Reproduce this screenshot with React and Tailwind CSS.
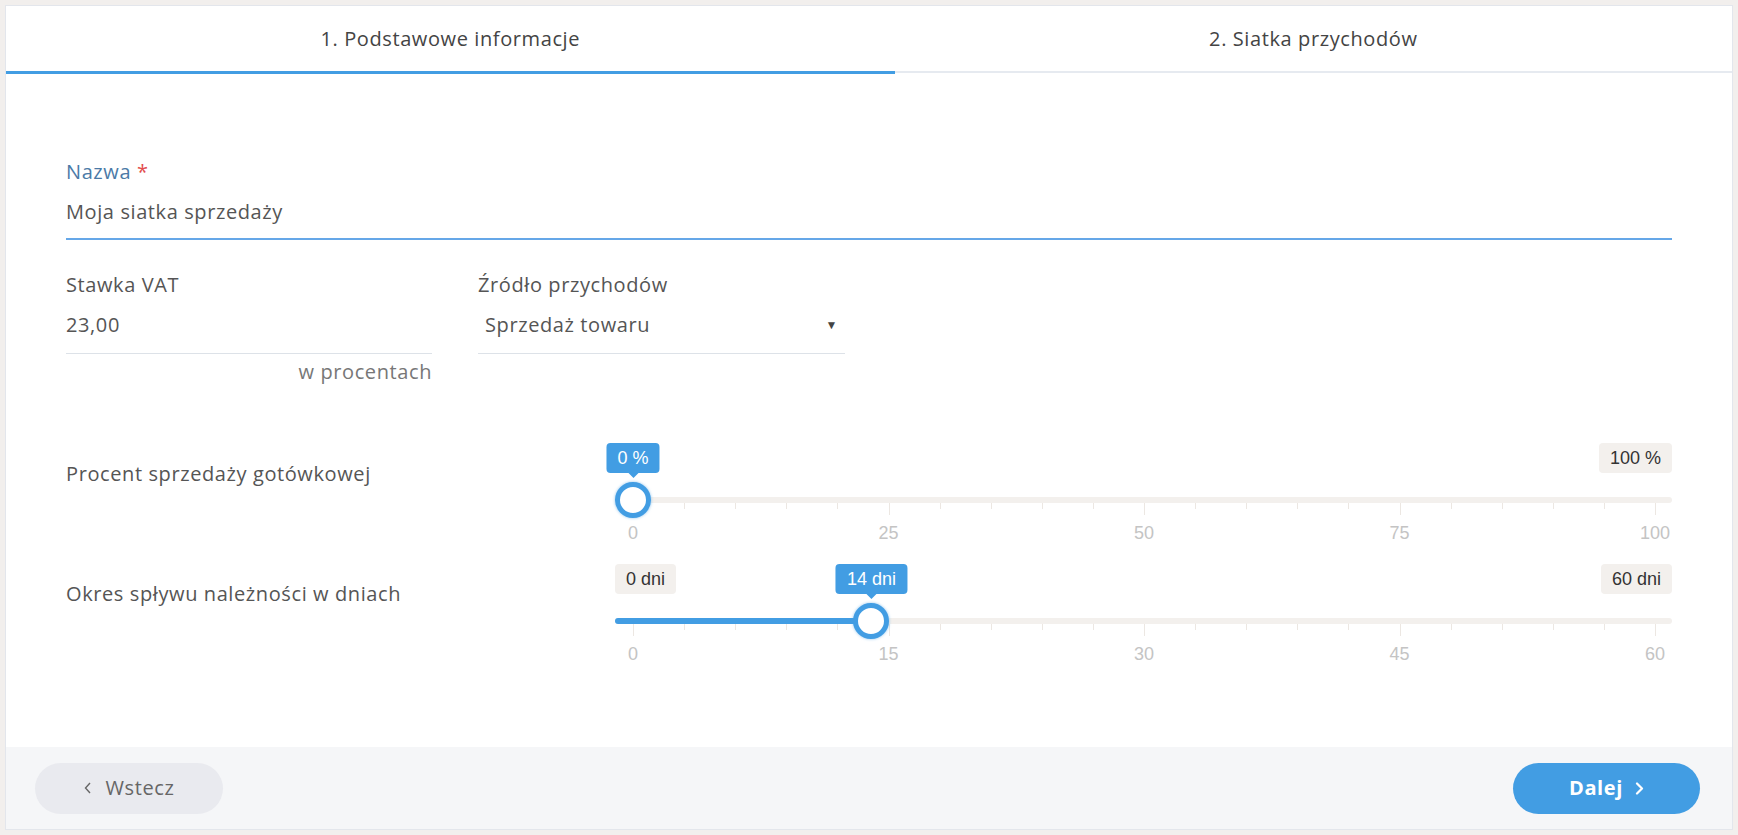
import React from "react";

function Slider({ value, max, unit, showMin }) {
  const ticks = Array.from({ length: 21 }, (_, i) => i);
  // thumb centre travels from 18px to (width - 17px)
  const pos = (f) => `calc(18px + (100% - 35px) * ${f})`;
  const f = value / max;

  return (
    <div className="relative h-[121px] flex-1 font-['Liberation_Sans',Arial,sans-serif] tracking-normal">
      {showMin && (
        <div className="absolute left-0 top-0 h-[30px] px-[11px] rounded-[4px] bg-[#f3f0ed] text-[18px] leading-[30px] text-[#333]">
          0 {unit}
        </div>
      )}
      <div className="absolute right-0 top-0 h-[30px] px-[11px] rounded-[4px] bg-[#f3f0ed] text-[18px] leading-[30px] text-[#333]">
        {max} {unit}
      </div>

      {/* track */}
      <div className="absolute left-0 right-0 top-[54px] h-[6px] rounded-full bg-[#f3f0ed]" />
      {f > 0 && (
        <div
          className="absolute left-0 top-[54px] h-[6px] rounded-full bg-[#429de3]"
          style={{ width: pos(f) }}
        />
      )}

      {/* ticks */}
      {ticks.map((i) => (
        <div
          key={i}
          className={`absolute top-[60px] w-px bg-[#ece7e2] ${i % 5 === 0 ? "h-[12px]" : "h-[6px]"}`}
          style={{ left: pos(i / 20) }}
        />
      ))}

      {/* scale numbers */}
      {[0, 1, 2, 3, 4].map((i) => (
        <div
          key={i}
          className="absolute top-[80px] -translate-x-1/2 text-[18px] leading-[20px] text-[#c4c4c4]"
          style={{ left: pos(i / 4) }}
        >
          {(max / 4) * i}
        </div>
      ))}

      {/* value bubble */}
      <div className="absolute top-0 -translate-x-1/2 flex flex-col items-center" style={{ left: pos(f) }}>
        <div className="h-[30px] px-[11px] rounded-[4px] bg-[#429de3] text-[18px] leading-[30px] text-white whitespace-nowrap">
          {value} {unit}
        </div>
        <div className="w-0 h-0 border-x-[5px] border-x-transparent border-t-[5px] border-t-[#429de3]" />
      </div>

      {/* thumb */}
      <div
        className="absolute top-[39px] -translate-x-1/2 w-[36px] h-[36px] rounded-full border-[5px] border-[#429de3] bg-white shadow-[0_0_3px_rgba(66,157,227,0.6)]"
        style={{ left: pos(f) }}
      />
    </div>
  );
}

export default function App() {
  return (
    <div className="min-h-screen bg-[#f2efed] p-[5px] font-['Open_Sans',sans-serif] tracking-[0.6px]">
      <div className="h-[825px] flex flex-col border border-[#e3e6ec] bg-white">
        {/* Steps */}
        <div className="flex h-[68px] shrink-0">
          <div className="flex-auto flex items-center justify-center border-b-[3px] border-[#429de3] text-[20px] text-[#444]">
            1. Podstawowe informacje
          </div>
          <div className="flex-auto flex items-center justify-center border-b-2 border-[#e6eaf0] mb-px text-[20px] text-[#444]">
            2. Siatka przychodów
          </div>
        </div>

        {/* Form */}
        <div className="flex-1 px-[60px] pt-[84px]">
          <div>
            <div className="text-[20px] leading-[28px] text-[#4b7aa7]">
              Nazwa <span className="text-[#e24c4c]">*</span>
            </div>
            <div className="mt-[12px] pb-[12px] border-b-2 border-[#65a7e8] text-[20px] leading-[28px] text-[#555]">
              Moja siatka sprzedaży
            </div>
          </div>

          <div className="mt-[31px] flex gap-[46px]">
            <div className="w-[366px]">
              <div className="text-[20px] leading-[28px] text-[#555]">Stawka VAT</div>
              <div className="mt-[12px] pb-[14px] border-b border-[#dde2e8] text-[20px] leading-[28px] text-[#555]">
                23,00
              </div>
              <div className="mt-[4px] text-right text-[20px] leading-[28px] text-[#777]">w procentach</div>
            </div>
            <div className="w-[367px]">
              <div className="text-[20px] leading-[28px] text-[#555]">Źródło przychodów</div>
              <div className="mt-[12px] pb-[14px] pl-[7px] pr-[7px] border-b border-[#dde2e8] flex items-center justify-between text-[20px] leading-[28px] text-[#555]">
                <span>Sprzedaż towaru</span>
                <span className="text-[12px] text-[#444] font-['Liberation_Sans',sans-serif]">▼</span>
              </div>
            </div>
          </div>

          <div className="mt-[57px] flex">
            <div className="w-[549px] pt-[17px] text-[20px] leading-[28px] text-[#555]">
              Procent sprzedaży gotówkowej
            </div>
            <Slider value={0} max={100} unit="%" />
          </div>
          <div className="flex">
            <div className="w-[549px] pt-[16px] text-[20px] leading-[28px] text-[#555]">
              Okres spływu należności w dniach
            </div>
            <Slider value={14} max={60} unit="dni" showMin />
          </div>
        </div>

        {/* Footer */}
        <div className="h-[82px] shrink-0 flex items-center justify-between bg-[#f5f6f8] pl-[29px] pr-[32px]">
          <button
            type="button"
            className="h-[51px] w-[188px] rounded-full bg-[#e9eaef] flex items-center justify-center gap-[14px] text-[20px] text-[#666]"
          >
            <svg className="w-[8px] h-[12px]" viewBox="0 0 8 12" fill="none" stroke="currentColor" strokeWidth="1.4">
              <path d="M6 1L1.5 6L6 11" />
            </svg>
            Wstecz
          </button>
          <button
            type="button"
            className="h-[51px] w-[187px] rounded-full bg-[#429de3] flex items-center justify-center gap-[12px] text-[20px] font-bold text-white"
          >
            Dalej
            <svg className="w-[9px] h-[13px]" viewBox="0 0 9 13" fill="none" stroke="currentColor" strokeWidth="2.2" strokeLinecap="round" strokeLinejoin="round">
              <path d="M2 1.5L7 6.5L2 11.5" />
            </svg>
          </button>
        </div>
      </div>
    </div>
  );
}
